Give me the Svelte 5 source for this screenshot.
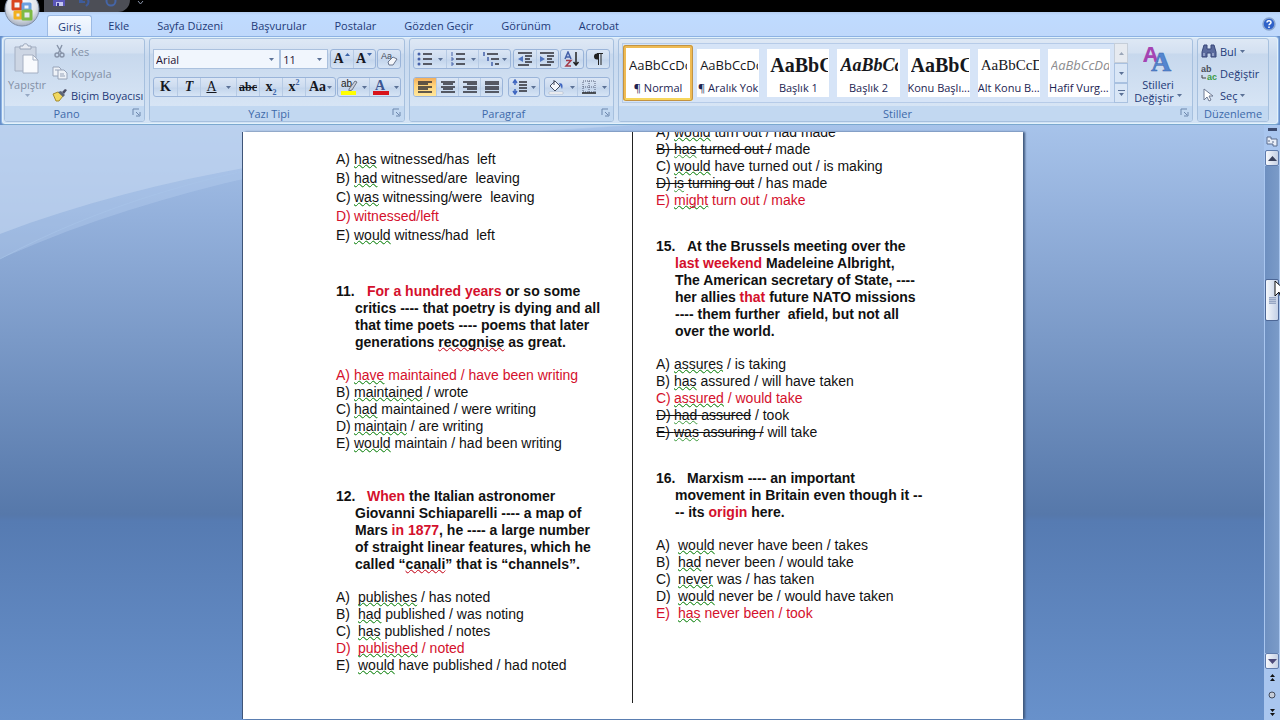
<script lang="ts">
    type Run = [string, string?];
    type Option = { letter: string, runs: Run[], red?: boolean };
    type Block = { number?: string, stem?: Run[][], options: Option[], loose?: boolean, wide?: boolean };

    const tabs = ['Giriş', 'Ekle', 'Sayfa Düzeni', 'Başvurular', 'Postalar', 'Gözden Geçir', 'Görünüm', 'Acrobat'];

    const styles = [
        { sample: 'AaBbCcDc', name: '¶ Normal', look: 'plain' },
        { sample: 'AaBbCcDc', name: '¶ Aralık Yok', look: 'plain' },
        { sample: 'AaBbC', name: 'Başlık 1', look: 'heading' },
        { sample: 'AaBbCc', name: 'Başlık 2', look: 'heading slanted' },
        { sample: 'AaBbC', name: 'Konu Başlı...', look: 'heading' },
        { sample: 'AaBbCcD', name: 'Alt Konu B...', look: 'serif' },
        { sample: 'AaBbCcDd', name: 'Hafif Vurg...', look: 'faint' },
    ];

    // run classes: g = grammar mark, s = spelling mark, x = struck out, r = red
    const left: Block[] = [
        {
            loose: true,
            options: [
                { letter: 'A)', runs: [['has', 'g'], [' witnessed/has  left']] },
                { letter: 'B)', runs: [['had', 'g'], [' witnessed/are  leaving']] },
                { letter: 'C)', runs: [['was', 'g'], [' witnessing/were  leaving']] },
                { letter: 'D)', runs: [['witnessed/left']], red: true },
                { letter: 'E)', runs: [['would', 'g'], [' witness/had  left']] },
            ],
        },
        {
            number: '11.',
            stem: [
                [['For a hundred years', 'r'], [' or so some']],
                [['critics ---- that poetry is dying and all']],
                [['that time poets ---- poems that later']],
                [['generations '], ['recognise', 's'], [' as great.']],
            ],
            options: [
                { letter: 'A)', runs: [['have', 'g'], [' maintained / have been writing']], red: true },
                { letter: 'B)', runs: [['maintained', 'g'], [' / wrote']] },
                { letter: 'C)', runs: [['had', 'g'], [' maintained / were writing']] },
                { letter: 'D)', runs: [['maintain', 'g'], [' / are writing']] },
                { letter: 'E)', runs: [['would', 'g'], [' maintain / had been writing']] },
            ],
        },
        {
            number: '12.',
            wide: true,
            stem: [
                [['When', 'r'], [' the Italian astronomer']],
                [['Giovanni Schiaparelli ---- a map of']],
                [['Mars '], ['in 1877', 'r'], [', he ---- a large number']],
                [['of straight linear features, which he']],
                [['called “'], ['canali', 's'], ['” that is “channels”.']],
            ],
            options: [
                { letter: 'A)', runs: [['publishes', 'g'], [' / has noted']] },
                { letter: 'B)', runs: [['had', 'g'], [' published / was noting']] },
                { letter: 'C)', runs: [['has', 'g'], [' published / notes']] },
                { letter: 'D)', runs: [['published', 'g'], [' / noted']], red: true },
                { letter: 'E)', runs: [['would', 'g'], [' have published / had noted']] },
            ],
        },
    ];

    const right: Block[] = [
        {
            options: [
                { letter: 'A)', runs: [['would', 'g'], [' turn out / had made']] },
                { letter: 'B)', runs: [['has', 'g x'], [' turned out /', 'x'], [' made']] },
                { letter: 'C)', runs: [['would', 'g'], [' have turned out / is making']] },
                { letter: 'D)', runs: [['is', 'g x'], [' turning out', 'x'], [' / has made']] },
                { letter: 'E)', runs: [['might', 'g'], [' turn out / make']], red: true },
            ],
        },
        {
            number: '15.',
            stem: [
                [['At the Brussels meeting over the']],
                [['last weekend', 'r'], [' Madeleine Albright,']],
                [['The American secretary of State, ----']],
                [['her allies '], ['that', 'r'], [' future NATO missions']],
                [['---- them further  afield, but not all']],
                [['over the world.']],
            ],
            options: [
                { letter: 'A)', runs: [['assures', 'g'], [' / is taking']] },
                { letter: 'B)', runs: [['has', 'g'], [' assured / will have taken']] },
                { letter: 'C)', runs: [['assured', 'g'], [' / would take']], red: true },
                { letter: 'D)', runs: [['had', 'g x'], [' assured', 'x'], [' / took']] },
                { letter: 'E)', runs: [['was', 'g x'], [' assuring /', 'x'], [' will take']] },
            ],
        },
        {
            number: '16.',
            wide: true,
            stem: [
                [['Marxism ---- an important']],
                [['movement in Britain even though it --']],
                [['-- its '], ['origin', 'r'], [' here.']],
            ],
            options: [
                { letter: 'A)', runs: [['would', 'g'], [' never have been / takes']] },
                { letter: 'B)', runs: [['had', 'g'], [' never been / would take']] },
                { letter: 'C)', runs: [['never', 'g'], [' was / has taken']] },
                { letter: 'D)', runs: [['would', 'g'], [' never be / would have taken']] },
                { letter: 'E)', runs: [['has', 'g'], [' never been / took']], red: true },
            ],
        },
    ];

    let activeTab = $state('Giriş');
    let activeStyle = $state(0);
</script>

{#snippet arrow()}
    <svg class="arrow" width="5" height="3" viewBox="0 0 5 3"><path d="M0 0h5L2.5 3z" fill="#5b7196" /></svg>
{/snippet}

{#snippet launcher(name)}
    <button class="launcher" aria-label={name}>
        <svg width="9" height="9" viewBox="0 0 9 9" fill="none" stroke="#6c87ad"><path d="M1 7V1h6M4 4l3 3M8 4v4H4" /></svg>
    </button>
{/snippet}

{#snippet lines(rows)}
    {#each rows as [x, y, w]}
        <path d="M{x} {y}h{w}" stroke="#2c2c34" stroke-width="1.4" />
    {/each}
{/snippet}

{#snippet text(runs)}
    {#each runs as [words, cls]}
        {#if cls}<span class={cls.includes('x') ? 'x' : cls}><span class={cls}>{words}</span></span>{:else}{words}{/if}
    {/each}
{/snippet}

{#snippet column(blocks)}
    {#each blocks as block}
        <section class:loose={block.loose}>
            {#if block.stem}
                <div class="stem">
                    {#each block.stem as line, i}
                        <div class="line" class:first={i === 0}>
                            {#if i === 0}<span class="number">{block.number}</span>{/if}{@render text(line)}
                        </div>
                    {/each}
                </div>
            {/if}
            <div class="options" class:wide={block.wide}>
                {#each block.options as option}
                    <div class="line" class:red={option.red}>
                        <span class="letter" class:x={option.runs[0][1]?.includes('x')}>{option.letter + ' '}</span>{@render text(option.runs)}
                    </div>
                {/each}
            </div>
        </section>
    {/each}
{/snippet}

<div class="app">
    <div class="titlebar">
        <div class="quick">
            <button aria-label="Kaydet">
                <svg width="14" height="14" viewBox="0 0 14 14"><path d="M1 1h12v12H1z" fill="#5a56b8" /><path d="M3 1h8v6H3z" fill="#dfe4fb" /><path d="M4 9h7v4H4z" fill="#c4c6ef" /><path d="M5 10h2v3H5z" fill="#3c3792" /></svg>
            </button>
            <button aria-label="Geri al">
                <svg width="14" height="14" viewBox="0 0 14 14"><path d="M2 4v5h5M3 8c3-5 9-3 7 3l-2 2" fill="none" stroke="#3e5c9c" stroke-width="2" /></svg>
            </button>
            <button aria-label="Yinele">
                <svg width="14" height="14" viewBox="0 0 14 14"><circle cx="7" cy="8" r="4.5" fill="none" stroke="#4565a6" stroke-width="2" /></svg>
            </button>
        </div>
        <svg class="quick-more" width="7" height="5" viewBox="0 0 7 5"><path d="M1 1l2.5 3L6 1" fill="none" stroke="#8c97ad" /></svg>
    </div>

    <button class="office" aria-label="Office Düğmesi">
        <svg width="36" height="36" viewBox="0 0 36 36">
            <defs>
                <radialGradient id="orb" cx="50%" cy="35%" r="65%">
                    <stop offset="0" stop-color="#fff" /><stop offset=".65" stop-color="#e1e5ec" /><stop offset="1" stop-color="#a3adbd" />
                </radialGradient>
            </defs>
            <circle cx="18" cy="18" r="17" fill="url(#orb)" stroke="#7e8da6" />
            <g fill="none" stroke-width="3" stroke-linejoin="round">
                <path d="M9 10h8v8H9z" stroke="#d9441f" />
                <path d="M19 13h7v6h-7z" stroke="#6ba0e0" />
                <path d="M11 21h6v6h-6z" stroke="#f2b01e" />
                <path d="M19 20h8v8h-8z" stroke="#7dba45" />
            </g>
        </svg>
    </button>

    <nav class="tabs">
        {#each tabs as tab}
            <button class="tab" class:active={tab === activeTab} onclick={() => activeTab = tab}>{tab}</button>
        {/each}
        <button class="help" aria-label="Yardım">
            <svg width="14" height="14" viewBox="0 0 14 14"><circle cx="7" cy="7" r="6" fill="#2f62c9" stroke="#8ba6cf" stroke-width="1.5" /><path d="M5 5.5c0-2.5 4-2.5 4 0 0 1.3-2 1.3-2 2.7M7 9.5v1.5" fill="none" stroke="#fff" stroke-width="1.5" /></svg>
        </button>
    </nav>

    <div class="ribbon">
        <div class="group pano">
            <div class="body">
                <button class="big paste off">
                    <svg width="28" height="32" viewBox="0 0 28 32">
                        <path d="M2 4h21v24H2z" fill="#cdd6e4" stroke="#a4afc2" />
                        <path d="M7 6V3h3c0-3 5-3 5 0h3v3z" fill="#e8ecf3" stroke="#98a4b8" />
                        <path d="M10 12h10l5 5v13H10z" fill="#f8fafd" stroke="#a4afc2" />
                        <path d="M20 12v5h5" fill="none" stroke="#a4afc2" />
                    </svg>
                    <span>Yapıştır</span>
                    {@render arrow()}
                </button>
                <div class="stack">
                    <button class="off">
                        <svg width="16" height="14" viewBox="0 0 16 14" fill="none" stroke="#8894a9" stroke-width="1.4"><path d="M5 1l5 9M10 1L6 10" /><circle cx="5" cy="11" r="2" /><circle cx="10" cy="11" r="2" /></svg>
                        Kes
                    </button>
                    <button class="off">
                        <svg width="16" height="14" viewBox="0 0 16 14" fill="#eef2f8" stroke="#97a3b8"><path d="M1 1h6l2 2v7H1z" /><path d="M6 4h6l3 3v6H6z" /><path d="M8 8h4M8 10h5M3 4h3" /></svg>
                        Kopyala
                    </button>
                    <button>
                        <svg width="16" height="14" viewBox="0 0 16 14"><path d="M1 6l5-2 5 4-4 5H4z" fill="#f0d860" stroke="#a58b2e" /><path d="M6 4l3-1 4 4-2 2z" fill="#5d6678" /><path d="M10 4l3-3 2 1-3 4z" fill="#4a4d63" /></svg>
                        Biçim Boyacısı
                    </button>
                </div>
            </div>
            <div class="caption">Pano{@render launcher('Pano')}</div>
        </div>

        <div class="group font">
            <div class="body rows">
                <div class="row">
                    <div class="combo face">
                        <select aria-label="Yazı tipi"><option>Arial</option></select>{@render arrow()}
                    </div>
                    <div class="combo size">
                        <select aria-label="Yazı boyutu"><option>11</option></select>{@render arrow()}
                    </div>
                    <div class="set gap">
                        <button class="serif-icon grow" aria-label="Yazı tipini büyüt">A<svg width="5" height="3" viewBox="0 0 5 3"><path d="M0 3h5L2.5 0z" fill="#3b64a8" /></svg></button>
                        <button class="serif-icon shrink" aria-label="Yazı tipini küçült">A<svg width="5" height="3" viewBox="0 0 5 3"><path d="M0 0h5L2.5 3z" fill="#3b64a8" /></svg></button>
                    </div>
                    <div class="set">
                        <button aria-label="Biçimlendirmeyi temizle">
                            <svg width="18" height="16" viewBox="0 0 18 16"><text x="1" y="8" font-size="9" font-family="Liberation Sans" fill="#444b5a">Aa</text><path d="M8 11l5-5 4 2-4 6H9z" fill="#f4f6fa" stroke="#68748c" /></svg>
                        </button>
                    </div>
                </div>
                <div class="row">
                    <div class="set">
                        <button class="serif-icon"><b>K</b></button>
                        <button class="serif-icon"><b><i>T</i></b></button>
                        <button class="serif-icon split"><u>A</u>{@render arrow()}</button>
                        <button class="serif-icon small"><s>abc</s></button>
                        <button class="serif-icon"><b>x<sub>2</sub></b></button>
                        <button class="serif-icon"><b>x<sup>2</sup></b></button>
                        <button class="serif-icon case"><b>Aa</b>{@render arrow()}</button>
                    </div>
                    <div class="set">
                        <button class="color" aria-label="Metin vurgu rengi">
                            <svg width="18" height="18" viewBox="0 0 18 18"><text x="1" y="9" font-size="10" font-family="Liberation Sans" fill="#222">ab</text><path d="M9 11l6-8 2 1-5 8-3 1z" fill="#c9cfdb" stroke="#555e70" stroke-width=".8" /><path d="M1 13h15v4H1z" fill="#ffff00" /></svg>
                            {@render arrow()}
                        </button>
                        <button class="color" aria-label="Yazı tipi rengi">
                            <svg width="18" height="18" viewBox="0 0 18 18"><text x="3" y="12" font-size="14" font-family="Liberation Serif" font-weight="bold" fill="#3d5692">A</text><path d="M1 13h16v4H1z" fill="#d8131b" /></svg>
                            {@render arrow()}
                        </button>
                    </div>
                </div>
            </div>
            <div class="caption">Yazı Tipi{@render launcher('Yazı Tipi')}</div>
        </div>

        <div class="group para">
            <div class="body rows">
                <div class="row">
                    <div class="set lists">
                        <button aria-label="Madde işaretleri">
                            <svg width="16" height="16" viewBox="0 0 16 16">{@render lines([[6, 3, 9], [6, 8, 9], [6, 13, 9]])}<g fill="#4560a8"><circle cx="2" cy="3" r="1.5" /><circle cx="2" cy="8" r="1.5" /><circle cx="2" cy="13" r="1.5" /></g></svg>
                            {@render arrow()}
                        </button>
                        <button aria-label="Numaralandırma">
                            <svg width="16" height="16" viewBox="0 0 16 16">{@render lines([[6, 3, 9], [6, 8, 9], [6, 13, 9]])}<path d="M2 1v4M1 7h2v2H1M1 12h2v2H1" fill="none" stroke="#4560a8" /></svg>
                            {@render arrow()}
                        </button>
                        <button aria-label="Çok düzeyli liste">
                            <svg width="18" height="16" viewBox="0 0 18 16">{@render lines([[4, 3, 11], [8, 8, 8], [12, 13, 4]])}<path d="M1 1v4M5 6v4M9 11v4" stroke="#4560a8" stroke-width="1.5" /></svg>
                            {@render arrow()}
                        </button>
                    </div>
                    <div class="set">
                        <button aria-label="Girintiyi azalt">
                            <svg width="16" height="16" viewBox="0 0 16 16">{@render lines([[1, 2, 14], [8, 5, 7], [8, 8, 5], [8, 11, 7], [1, 14, 11]])}<path d="M6 5v6L1 8z" fill="#4f74c0" /></svg>
                        </button>
                        <button aria-label="Girintiyi artır">
                            <svg width="16" height="16" viewBox="0 0 16 16">{@render lines([[1, 2, 14], [8, 5, 7], [8, 8, 5], [8, 11, 7], [1, 14, 11]])}<path d="M1 5v6l5-3z" fill="#4f74c0" /></svg>
                        </button>
                    </div>
                    <div class="set">
                        <button aria-label="Sırala">
                            <svg width="16" height="16" viewBox="0 0 16 16" fill="none" stroke-width="1.5"><path d="M1 8l3-7 3 7M2 6h4" stroke="#4560a8" /><path d="M2 9.5h5l-5 5.5h5" stroke="#a33b4b" /><path d="M12 1v13M9.5 11l2.5 3 2.5-3" stroke="#222" /></svg>
                        </button>
                    </div>
                    <div class="set">
                        <button aria-label="Göster/Gizle">
                            <svg width="14" height="14" viewBox="0 0 14 14"><path d="M7 1.5H6a3 3 0 0 0 0 6h1z" fill="#222" /><path d="M6 1.5h6M7.5 1v12M10 1v12" fill="none" stroke="#222" /></svg>
                        </button>
                    </div>
                </div>
                <div class="row">
                    <div class="set">
                        <button class="pressed" aria-label="Sola hizala">
                            <svg width="16" height="16" viewBox="0 0 16 16">{@render lines([[1, 3, 14], [1, 5, 10], [1, 8, 14], [1, 10, 10], [1, 13, 14]])}</svg>
                        </button>
                        <button aria-label="Ortala">
                            <svg width="16" height="16" viewBox="0 0 16 16">{@render lines([[1, 3, 14], [3, 5, 10], [1, 8, 14], [3, 10, 10], [1, 13, 14]])}</svg>
                        </button>
                        <button aria-label="Sağa hizala">
                            <svg width="16" height="16" viewBox="0 0 16 16">{@render lines([[1, 3, 14], [5, 5, 10], [1, 8, 14], [5, 10, 10], [1, 13, 14]])}</svg>
                        </button>
                        <button aria-label="İki yana yasla">
                            <svg width="16" height="16" viewBox="0 0 16 16">{@render lines([[1, 3, 14], [1, 5, 14], [1, 8, 14], [1, 10, 14], [1, 13, 14]])}</svg>
                        </button>
                    </div>
                    <div class="set">
                        <button class="drop" aria-label="Satır aralığı">
                            <svg width="16" height="16" viewBox="0 0 16 16">{@render lines([[7, 3, 8], [7, 6, 8], [7, 9, 8], [7, 12, 8]])}<path d="M3 2v4M1 4l2-3 2 3M3 10v4M1 12l2 3 2-3" fill="none" stroke="#3f66c0" stroke-width="1.5" /></svg>
                            {@render arrow()}
                        </button>
                    </div>
                    <div class="set wide-drops">
                        <button class="drop" aria-label="Gölgelendirme">
                            <svg width="18" height="16" viewBox="0 0 18 16"><path d="M3 7l5-5 5 5-5 5z" fill="#f5f7fb" stroke="#444c60" /><path d="M7 1v5" stroke="#444c60" /><path d="M12 4c4 0 4 3 3 6-1-2-2-4-3-6" fill="#3f66c0" /><path d="M2 13h14v2H2z" fill="#fff" stroke="#a0a8b8" stroke-width=".5" /></svg>
                            {@render arrow()}
                        </button>
                        <button class="drop" aria-label="Kenarlıklar">
                            <svg width="16" height="16" viewBox="0 0 16 16" fill="none" stroke="#56617a"><path d="M2 2h12v11H2zM8 2v11M2 8h12" stroke-dasharray="1 1" /><path d="M1 14h14" stroke="#222" stroke-width="1.5" /></svg>
                            {@render arrow()}
                        </button>
                    </div>
                </div>
            </div>
            <div class="caption">Paragraf{@render launcher('Paragraf')}</div>
        </div>

        <div class="group styles">
            <div class="body">
                <div class="gallery">
                    {#each styles as style, i}
                        <button class="style" class:selected={i === activeStyle} onclick={() => activeStyle = i}>
                            <span class="sample {style.look}">{style.sample}</span>
                            <span class="name">{style.name}</span>
                        </button>
                    {/each}
                </div>
                <div class="gallery-nav">
                    <button class="faded" aria-label="Önceki satır"><svg width="5" height="3" viewBox="0 0 5 3"><path d="M0 3h5L2.5 0z" fill="#9aa6b8" /></svg></button>
                    <button aria-label="Sonraki satır">{@render arrow()}</button>
                    <button aria-label="Diğer"><svg width="7" height="6" viewBox="0 0 7 6"><path d="M0 0h7v1H0zM1 3h5L3.5 6z" fill="#5b7196" /></svg></button>
                </div>
                <button class="big change">
                    <svg width="30" height="30" viewBox="0 0 30 30">
                        <text x="0" y="18" font-size="22" font-family="Open Sans" font-weight="bold" fill="#a544b2">A</text>
                        <text x="8" y="27" font-size="28" font-family="Liberation Serif" font-weight="bold" fill="#5486d0" stroke="#3c66ad" stroke-width=".5">A</text>
                    </svg>
                    <span>Stilleri</span>
                    <span>Değiştir {@render arrow()}</span>
                </button>
            </div>
            <div class="caption">Stiller{@render launcher('Stiller')}</div>
        </div>

        <div class="group edit">
            <div class="body">
                <div class="stack">
                    <button>
                        <svg width="16" height="14" viewBox="0 0 16 14" fill="#5a6a9c" stroke="#39477a"><path d="M3 1h3v4h4V1h3l2 7v5h-5V9H6v4H1V8z" /><path d="M3 9v3M12 9v3" stroke="#c9d3ee" /></svg>
                        Bul {@render arrow()}
                    </button>
                    <button>
                        <svg width="16" height="16" viewBox="0 0 16 16"><text x="0" y="7" font-size="9" font-weight="bold" font-family="Liberation Sans" fill="#4a4f5c">ab</text><text x="6" y="15" font-size="9" font-weight="bold" font-family="Liberation Sans" fill="#3b9c48">ac</text><path d="M1 10v3h4" fill="none" stroke="#444" /></svg>
                        Değiştir
                    </button>
                    <button>
                        <svg width="16" height="14" viewBox="0 0 16 14"><path d="M3 1v11l3-3 2 4 2-1-2-4h4z" fill="#fff" stroke="#6e7a93" /></svg>
                        Seç {@render arrow()}
                    </button>
                </div>
            </div>
            <div class="caption plain-caption">Düzenleme</div>
        </div>
    </div>

    <main>
        <svg class="swoosh" width="1000" height="140" viewBox="0 0 1000 140">
            <path d="M0 0H640C440 12 200 44 0 134z" fill="#b9d2f0" fill-opacity=".35" />
            <path d="M0 0H640C400 14 180 40 0 109z" fill="#c8d9f2" fill-opacity=".5" />
            <path d="M0 134C200 26 440 12 640 0" fill="none" stroke="#a9c5ea" stroke-opacity=".6" />
        </svg>
        <div class="desk">
            <article class="page">
                <div class="column">{@render column(left)}</div>
                <div class="column last">{@render column(right)}</div>
            </article>
        </div>
        <aside class="scroll">
            <span class="splitter"></span>
            <button class="ruler" aria-label="Cetvel">
                <svg width="12" height="12" viewBox="0 0 12 12"><path d="M1 2h4v2h6v7H7V9H1z" fill="#e8eef8" stroke="#5b6c8d" /><path d="M3 5v2M7 6v2" stroke="#5b6c8d" /></svg>
            </button>
            <button class="step" aria-label="Yukarı kaydır"><svg width="9" height="5" viewBox="0 0 9 5"><path d="M0 5h9L4.500 0z" fill="#39415c" /></svg></button>
            <div class="track"><div class="thumb"></div></div>
            <button class="step" aria-label="Aşağı kaydır"><svg width="9" height="5" viewBox="0 0 9 5"><path d="M0 0h9L4.500 5z" fill="#4c4a78" /></svg></button>
            <button class="browse" aria-label="Önceki sayfa"><svg width="7" height="8" viewBox="0 0 7 8"><path d="M1 3h5L3.500 0zM1 7h5L3.500 4z" fill="#111" /></svg></button>
            <button class="browse" aria-label="Gözatma nesnesini seç"><svg width="8" height="8" viewBox="0 0 8 8"><circle cx="4" cy="4" r="3" fill="#c5ccd8" stroke="#444c5c" /></svg></button>
            <button class="browse" aria-label="Sonraki sayfa"><svg width="7" height="8" viewBox="0 0 7 8"><path d="M1 1h5L3.500 4zM1 5h5L3.500 8z" fill="#111" /></svg></button>
        </aside>
    </main>

    <svg class="pointer" width="12" height="19" viewBox="0 0 12 19"><path d="M1 1v15l4-4 2 6 2-1-2-6h5z" fill="#fff" stroke="#111" /></svg>
</div>

<style>
    :global(body) {
        margin: 0;
        background: #6790ca;
    }

    .app {
        position: relative;
        display: flex;
        flex-direction: column;
        height: 100vh;
        overflow: hidden;
        font-family: "Open Sans", "Noto Sans", sans-serif;
        font-size: 11px;
        color: #1e3a78;
    }

    button {
        display: flex;
        align-items: center;
        justify-content: center;
        padding: 0;
        border: 0;
        background: none;
        font: inherit;
        color: inherit;
        white-space: nowrap;
    }

    svg {
        flex: none;
        display: block;
    }

    .titlebar {
        display: flex;
        flex: none;
        height: 12px;
        padding-left: 44px;
        background: #000;
        overflow: hidden;
    }

    .quick {
        display: flex;
        align-items: flex-end;
        gap: 12px;
        width: 72px;
        padding: 0 6px 5px 8px;
        background: #4c4e56;
        border-bottom-right-radius: 12px;
    }

    .quick-more {
        margin-left: 7px;
    }

    .office {
        position: absolute;
        top: -9px;
        left: 4px;
        z-index: 2;
    }

    .tabs {
        display: flex;
        flex: none;
        height: 24px;
        padding: 0 4px 0 47px;
        background: linear-gradient(#b4cdf0, #bfdbff 3px, #bfd8fb);
    }

    .tab {
        height: 21px;
        margin-top: 3px;
        padding: 0 14px;
    }

    .tab.active {
        padding: 0 10px;
        margin-right: 2px;
        background: linear-gradient(#f4f9ff, #e3edfb);
        border: 1px solid #9dbbe4;
        border-bottom: 0;
        border-radius: 3px 3px 0 0;
    }

    .help {
        margin-left: auto;
    }

    .ribbon {
        display: flex;
        flex: none;
        gap: 4px;
        height: 84px;
        margin: 0 1px;
        padding: 1px 9px 2px 2px;
        background: linear-gradient(#dbe7f6, #c8d9ee 20px, #d3e3f5);
        border: 1px solid #8db2e3;
        border-bottom-color: #7ba8cf;
        border-radius: 4px;
        box-shadow: inset 0 0 0 1px #e2f2fb;
    }

    .group {
        display: flex;
        flex-direction: column;
        box-sizing: border-box;
        border: 1px solid #a6c0de;
        border-radius: 3px;
        background: linear-gradient(#dee8f5, #d3e0f1 14px, #c7d8ed 15px, #dbe8f7);
        overflow: hidden;
    }

    .pano { width: 141px; }
    .font { width: 256px; }
    .para { width: 205px; }
    .styles { flex: 1; min-width: 0; }
    .edit { width: 72px; }

    .body {
        display: flex;
        flex: 1;
        min-height: 0;
    }

    .rows {
        flex-direction: column;
        gap: 8px;
        padding: 10px 3px 0;
    }

    .row {
        display: flex;
        justify-content: space-between;
        height: 20px;
    }

    .caption {
        display: flex;
        align-items: center;
        justify-content: center;
        position: relative;
        height: 15px;
        padding-right: 16px;
        background: #c2d8f1;
        color: #3e6aaa;
    }

    .plain-caption {
        padding-right: 0;
    }

    .launcher {
        position: absolute;
        right: 3px;
        top: 2px;
    }

    .big {
        flex-direction: column;
        line-height: 13px;
    }

    .big span {
        display: flex;
        align-items: center;
        gap: 3px;
    }

    .paste {
        width: 44px;
        gap: 3px;
        padding-bottom: 6px;
    }

    .off {
        color: #8390a6;
    }

    .off .arrow {
        opacity: 0.5;
    }

    .stack {
        display: flex;
        flex-direction: column;
        padding: 1px 0 0 3px;
    }

    .stack button {
        justify-content: flex-start;
        gap: 3px;
        height: 22px;
    }

    .combo {
        display: flex;
        align-items: center;
        box-sizing: border-box;
        padding-right: 5px;
        background: #f1f6fd;
        border: 1px solid #abc1de;
    }

    .face { width: 127px; }
    .size { width: 48px; margin-left: -1px; }

    .combo select {
        flex: 1;
        min-width: 0;
        padding: 0 2px;
        appearance: none;
        border: 0;
        background: none;
        font: inherit;
        color: #1d1230;
    }

    .set {
        display: flex;
        box-sizing: border-box;
        border: 1px solid #9ab4d9;
        border-radius: 3px;
        background: linear-gradient(#dbe6f5, #ccdbef 9px, #c3d5ec 10px, #d6e4f5);
        overflow: hidden;
    }

    .set button {
        min-width: 22px;
        padding: 0 1px;
        gap: 1px;
        box-sizing: border-box;
    }

    .set button + button {
        border-left: 1px solid #b6cae4;
    }

    .serif-icon {
        font-family: "Liberation Serif", serif;
        font-size: 14px;
        color: #16181f;
    }

    .set .serif-icon {
        width: 23px;
    }

    .set .grow,
    .set .shrink {
        width: 22px;
        padding: 0;
        font-weight: bold;
    }

    .grow svg,
    .shrink svg {
        align-self: flex-start;
        margin-top: 3px;
    }

    .small {
        font-size: 12px;
        font-weight: bold;
    }

    .serif-icon sub,
    .serif-icon sup {
        font-size: 8px;
        line-height: 1px;
        color: #3b64a8;
    }

    .set .split {
        width: 36px;
        gap: 9px;
    }

    .set .case {
        width: 30px;
    }

    .set .color {
        width: 31px;
        gap: 4px;
    }

    .lists button {
        width: 32px;
        gap: 5px;
    }

    .set .drop {
        width: 30px;
        gap: 3px;
    }

    .wide-drops .drop {
        width: 32px;
        gap: 5px;
    }

    .lists button:last-child {
        gap: 1px;
    }

    .pressed {
        background: linear-gradient(#f3ae5a, #ffd27a 40%, #ffe69a);
    }

    .styles .body {
        padding: 4px 4px 3px 3px;
    }

    .gallery {
        display: grid;
        grid-template-columns: repeat(7, minmax(0, 1fr));
        flex: 1;
        min-width: 0;
        border: 1px solid #b6cbe8;
        border-right: 0;
        background: #d6e4f7;
    }

    .style {
        flex-direction: column;
        justify-content: flex-end;
        gap: 3px;
        margin: 5px 4px;
        padding-bottom: 2px;
        background: #fff;
        color: #1c2452;
        overflow: hidden;
    }

    .style.selected {
        margin: 1px 0;
        padding-bottom: 3px;
        border: 3px solid #efbb54;
        border-bottom-color: #f7d65c;
        border-radius: 3px;
        outline: 1px solid #c29343;
        outline-offset: -1px;
    }

    .sample {
        align-self: flex-start;
        width: 58px;
        margin-left: 3px;
        line-height: 24px;
        text-align: left;
        overflow: hidden;
        font-size: 13px;
        color: #16171c;
    }

    .style .name {
        line-height: 15px;
    }

    .heading {
        font-family: "Liberation Serif", serif;
        font-weight: bold;
        font-size: 20px;
    }

    .slanted {
        font-style: italic;
        font-size: 18px;
    }

    .serif {
        font-family: "Liberation Serif", serif;
        font-size: 15px;
    }

    .faint {
        font-style: italic;
        color: #8d8d90;
    }

    .gallery-nav {
        display: grid;
        grid-template-rows: repeat(3, 1fr);
        width: 14px;
    }

    .gallery-nav button {
        border: 1px solid #a9c1e0;
        background: #d9e6f6;
    }

    .gallery-nav .faded {
        background: #e6eaf0;
        border-color: #c5ced9;
    }

    .change {
        width: 60px;
        padding-top: 2px;
    }

    .change svg:first-child {
        margin-bottom: 4px;
    }

    main {
        position: relative;
        display: flex;
        flex: 1;
        min-height: 0;
        background: linear-gradient(#a7c3ea, #94b1dc 90px, #5678aa 390px, #567bb2 396px, #6891cb);
    }

    .swoosh {
        position: absolute;
        top: 0;
        left: 0;
    }

    .desk {
        position: relative;
        display: flex;
        justify-content: center;
        flex: 1;
        padding: 7px 0 1px 2px;
    }

    .page {
        display: grid;
        grid-template-columns: 1fr 1fr;
        width: 780px;
        background: #fff;
        box-shadow: -1px 0 0 #3f5578, 2px 0 2px #40587c;
        overflow: hidden;
        font-family: "Liberation Sans", Arial, sans-serif;
        font-size: 14px;
        line-height: 17px;
        color: #111;
    }

    .column {
        margin-bottom: 16px;
        padding: 18px 0 0 93px;
        border-right: 1px solid #222;
    }

    .column.last {
        padding: 0 0 0 23px;
        border: 0;
        margin-top: -8px;
    }

    section {
        margin-bottom: 36px;
    }

    .last section {
        margin-bottom: 29px;
    }

    section.loose {
        margin-bottom: 38px;
        line-height: 19px;
    }

    .column section:last-child {
        margin-bottom: 0;
    }

    .stem {
        margin-bottom: 16px;
        padding-left: 19px;
        font-weight: bold;
    }

    .line {
        display: flex;
        white-space: pre;
    }

    .first {
        margin-left: -19px;
    }

    .number {
        width: 31px;
    }

    .letter {
        width: 18px;
    }

    .wide .letter {
        width: 22px;
    }

    .red,
    .r {
        color: #d4102c;
    }

    .g,
    .s {
        text-decoration: underline wavy #3d9a3d 1px;
        text-decoration-skip-ink: none;
        text-underline-offset: 0;
    }

    .s {
        text-decoration-color: #d03a4a;
    }

    .x {
        text-decoration: line-through #111 1px;
    }

    .x > .g {
        text-decoration: underline wavy #3d9a3d 1px;
    }

    .scroll {
        position: relative;
        display: flex;
        flex-direction: column;
        align-items: center;
        width: 14px;
        padding: 3px 1px 0;
        background: #a9c6ef;
    }

    .splitter {
        width: 9px;
        height: 3px;
        background: #3d4c70;
    }

    .ruler {
        height: 19px;
    }

    .step {
        width: 14px;
        height: 16px;
        box-sizing: border-box;
        border: 1px solid #5f7bab;
        border-radius: 2px;
        background: linear-gradient(90deg, #f6f8fc, #c5d0e4);
    }

    .track {
        flex: 1;
        width: 14px;
        padding-top: 113px;
        box-sizing: border-box;
        background: linear-gradient(90deg, #6d8fc0, #7b9bc8);
    }

    .thumb {
        height: 40px;
        border: 1px solid #4d6796;
        border-radius: 2px;
        background: repeating-linear-gradient(#96a6c4 0 1px, #b9c5da 1px 2px) center / 7px 7px no-repeat, linear-gradient(90deg, #f4f7fb, #c3d0e6);
    }

    .browse {
        height: 17px;
    }

    .pointer {
        position: absolute;
        top: 280px;
        right: -6px;
    }
</style>
